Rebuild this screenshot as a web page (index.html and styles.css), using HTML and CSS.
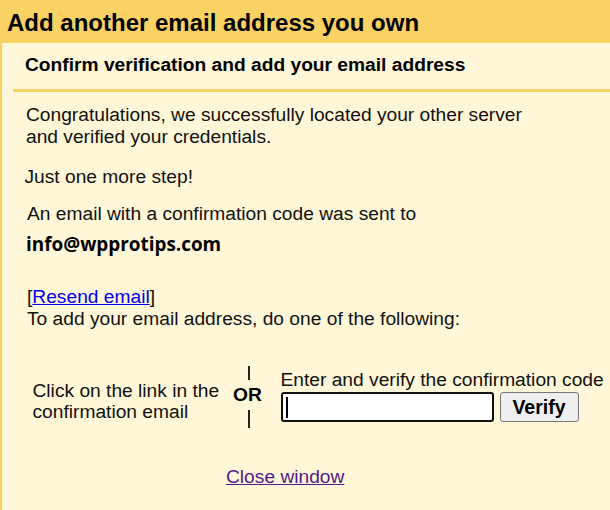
FILE: index.html
```html
<!DOCTYPE html>
<html lang="en">
<head>
<meta charset="utf-8">
<title>Add another email address you own</title>
<link rel="stylesheet" href="styles.css">
</head>
<body>
<div class="dialog">
  <div class="title">Add another email address you own</div>
  <div class="body">
    <div class="panel">
      <div class="panel-head">Confirm verification and add your email address</div>
      <div class="content">
        <p class="congrats">Congratulations, we successfully located your other server<br>and verified your credentials.</p>
        <p class="step">Just one more step!</p>
        <p class="sent">An email with a confirmation code was sent to</p>
        <p class="email">info@wpprotips.com</p>
        <p class="resend">[<a class="link" href="#">Resend email</a>]<br>To add your email address, do one of the following:</p>
        <div class="options">
          <div class="opt-left">Click on the link in the<br>confirmation email</div>
          <div class="opt-or">
            <span class="bar bar-top"></span>
            <span class="or-text">OR</span>
            <span class="bar bar-bottom"></span>
          </div>
          <div class="opt-right">
            <div class="opt-label">Enter and verify the confirmation code</div>
            <div class="code-row">
              <div class="code-box"><span class="caret"></span></div>
              <button class="verify" type="button">Verify</button>
            </div>
          </div>
        </div>
        <p class="close"><a class="close-link" href="#">Close window</a></p>
      </div>
    </div>
  </div>
</div>
</body>
</html>
```

FILE: styles.css
```css
html, body {
  margin: 0;
  padding: 0;
  background: #fff7d7;
}

body {
  font-family: "Liberation Sans", Arial, sans-serif;
  color: #111;
  width: 610px;
  height: 510px;
  overflow: hidden;
}

.dialog {
  display: flex;
  flex-direction: column;
  height: 510px;
}

.title {
  background: #fad163;
  height: 43px;
  box-sizing: border-box;
  padding: 3px 0 0 7px;
  font-size: 24px;
  font-weight: bold;
  line-height: 40px;
  color: #000;
  white-space: nowrap;
}

.body {
  flex: 1;
  background: #fff7d7;
  border-left: 2px solid #fad163;
}

.panel {
  margin-left: 11px;
}

.panel-head {
  padding: 11px 0 13px 12px;
  border-bottom: 3px solid #fad163;
  font-size: 19.2px;
  font-weight: bold;
  line-height: 21.8px;
  color: #000;
  white-space: nowrap;
}

.content {
  padding-left: 14px;
  font-size: 19.2px;
  line-height: 21.8px;
}

.content p {
  margin: 0;
}

.congrats {
  margin-top: 12.5px !important;
  margin-left: -1px !important;
}

.step {
  margin-top: 18px !important;
  margin-left: -2.5px !important;
}

.sent {
  margin-top: 15.5px !important;
}

.email {
  margin-top: 8.2px !important;
  margin-left: -1px !important;
  font-family: "Open Sans", "Noto Sans", sans-serif;
  font-weight: bold;
  font-size: 18.9px;
  line-height: 22px;
  color: #000;
}

.resend {
  margin-top: 30.7px !important;
}

.link {
  color: #0000ee;
  text-decoration: underline;
}

.options {
  display: flex;
  align-items: flex-start;
  margin-top: 37px;
}

.opt-left {
  width: 200px;
  margin-left: 5.5px;
  margin-top: 13.2px;
}

.opt-or {
  width: 30px;
  display: flex;
  flex-direction: column;
  align-items: center;
}

.bar {
  display: block;
  width: 2px;
  background: #222;
  margin-left: 3px;
}

.bar-top {
  height: 14px;
}

.bar-bottom {
  height: 18px;
  margin-top: 4px;
}

.or-text {
  display: block;
  margin-top: 4px;
  font-weight: bold;
  line-height: 22px;
  color: #000;
}

.opt-right {
  margin-left: 18px;
  margin-top: 2.2px;
}

.opt-label {
  white-space: nowrap;
}

.code-row {
  display: flex;
  align-items: center;
  gap: 6px;
  margin-top: 2px;
}

.code-box {
  width: 213px;
  height: 30px;
  box-sizing: border-box;
  border: 2px solid #111;
  border-radius: 3px;
  background: #fff;
  display: flex;
  align-items: center;
}

.caret {
  display: block;
  width: 2px;
  height: 21px;
  background: #000;
  margin-left: 3px;
}

.verify {
  width: 79px;
  height: 30px;
  box-sizing: border-box;
  border: 1px solid #767676;
  border-radius: 3px;
  background: #efefef;
  font-family: "Liberation Sans", Arial, sans-serif;
  font-size: 19.5px;
  font-weight: bold;
  color: #000;
  padding: 0;
}

.close {
  margin-top: 37.2px !important;
  margin-left: 199px !important;
}

.close-link {
  color: #551a8b;
  text-decoration: underline;
}
```
